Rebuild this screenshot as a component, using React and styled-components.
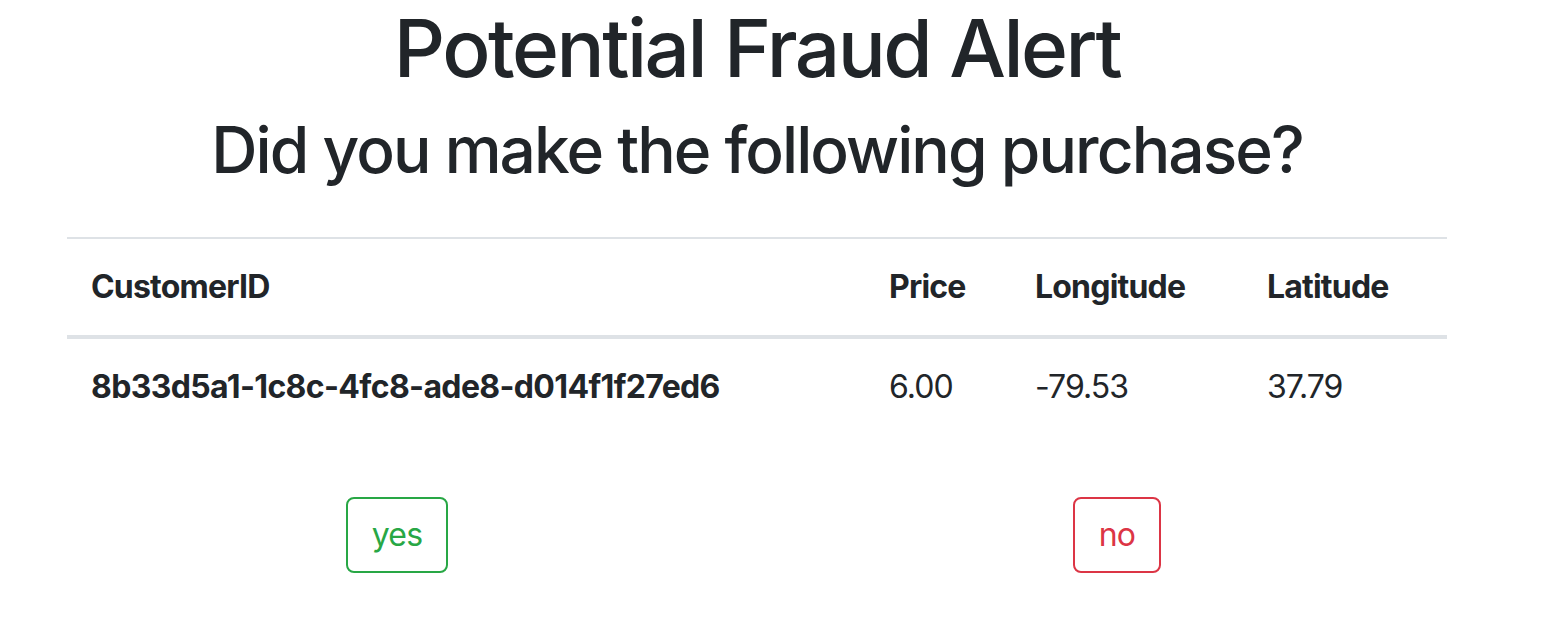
import React from 'react'
import styled, { createGlobalStyle } from 'styled-components'

const Global = createGlobalStyle`
  *, *::before, *::after {
    box-sizing: border-box;
  }
  html, body {
    margin: 0;
    padding: 0;
    background: #fff;
  }
  body {
    font-family: Inter, "Noto Sans", "Liberation Sans", sans-serif;
    color: #212529;
    font-size: 32px;
    line-height: 1.5;
    letter-spacing: -0.025em;
  }
`

const Container = styled.div`
  width: 1440px;
  margin-left: 37px;
  padding: 0 30px;
`

const Title = styled.h1`
  margin: 0 0 16px;
  font-size: 80px;
  font-weight: 500;
  line-height: 1.2;
  letter-spacing: -0.031em;
  text-align: center;
`

const Subtitle = styled.h2`
  margin: 0 0 48px;
  font-size: 64px;
  font-weight: 500;
  line-height: 1.2;
  letter-spacing: -0.03em;
  text-align: center;
`

const Table = styled.table`
  width: 100%;
  border-collapse: collapse;
  table-layout: fixed;
  margin-bottom: 32px;
`

const Th = styled.th`
  width: ${p => p.w}px;
  padding: 24px;
  text-align: left;
  font-weight: 700;
  border-top: 2px solid #dee2e6;
  border-bottom: 4px solid #dee2e6;
  vertical-align: bottom;
`

const Td = styled.td`
  padding: 24px;
  font-weight: ${p => (p.bold ? 700 : 400)};
  letter-spacing: ${p => (p.bold ? '-0.02em' : '-0.03em')};
  vertical-align: top;
`

const Row = styled.div`
  display: flex;
  margin: 0 -30px;
  padding-top: 30px;
`

const Col = styled.div`
  flex: 1;
  display: flex;
  justify-content: center;
`

const Button = styled.button`
  font-family: inherit;
  font-size: 32px;
  line-height: 1.5;
  letter-spacing: -0.025em;
  padding: 12px 24px;
  background: transparent;
  border: 2px solid ${p => p.color};
  color: ${p => p.color};
  border-radius: 8px;
  cursor: pointer;
`

const columns = [
  { key: 'id', label: 'CustomerID', w: 798 },
  { key: 'price', label: 'Price', w: 146 },
  { key: 'lon', label: 'Longitude', w: 232 },
  { key: 'lat', label: 'Latitude', w: 204 },
]

const purchase = {
  id: '8b33d5a1-1c8c-4fc8-ade8-d014f1f27ed6',
  price: '6.00',
  lon: '-79.53',
  lat: '37.79',
}

export default function App() {
  return (
    <>
      <Global />
      <Container>
        <Title>Potential Fraud Alert</Title>
        <Subtitle>Did you make the following purchase?</Subtitle>
        <Table>
          <thead>
            <tr>
              {columns.map(c => (
                <Th key={c.key} w={c.w}>{c.label}</Th>
              ))}
            </tr>
          </thead>
          <tbody>
            <tr>
              {columns.map(c => (
                <Td key={c.key} bold={c.key === 'id'}>{purchase[c.key]}</Td>
              ))}
            </tr>
          </tbody>
        </Table>
        <Row>
          <Col><Button color="#28a745">yes</Button></Col>
          <Col><Button color="#dc3545">no</Button></Col>
        </Row>
      </Container>
    </>
  )
}
